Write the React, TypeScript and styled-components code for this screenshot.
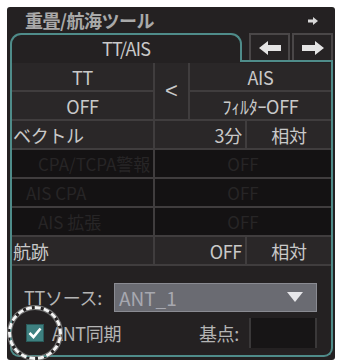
import React from 'react';
import styled, { createGlobalStyle } from 'styled-components';

const Global = createGlobalStyle`
  body {
    margin: 0;
    background: #ffffff;
    font-family: "Noto Sans CJK JP", "Noto Sans", sans-serif;
  }
`;

const TEAL = '#4f8c8a';
const TEXT = '#c9c9c9';

const Arrow = ({ dir }: { dir: 'left' | 'right' }) => (
  <svg width="24" height="16" viewBox="0 0 24 16">
    <path
      d="M1 8 L10 1 L10 5 L23 5 L23 11 L10 11 L10 15 Z"
      fill="#e4e4e4"
      transform={dir === 'right' ? 'translate(24 0) scale(-1 1)' : undefined}
    />
  </svg>
);

const rows = [
  { label: 'CPA/TCPA警報', value: 'OFF', indent: 26 },
  { label: 'AIS CPA', value: 'OFF', indent: 14 },
  { label: 'AIS 拡張', value: 'OFF', indent: 26 },
];

const App = () => {
  return (
    <>
      <Global />
      <S.Frame>
        <S.TitleBar>
          <span>重畳/航海ツール</span>
          <S.SmallArrow>
            <svg width="12" height="10" viewBox="0 0 12 10">
              <path d="M11 5 L6 1 L6 3.5 L1 3.5 L1 6.5 L6 6.5 L6 9 Z" fill="#d8d8d8" />
            </svg>
          </S.SmallArrow>
        </S.TitleBar>
        <S.TabRow>
          <S.Tab>TT/AIS</S.Tab>
          <S.ArrowGroup>
            <S.ArrowBtn>
              <Arrow dir="left" />
            </S.ArrowBtn>
            <S.ArrowBtn>
              <Arrow dir="right" />
            </S.ArrowBtn>
          </S.ArrowGroup>
        </S.TabRow>
        <S.Body>
          <S.Grid>
            <S.TopGrid>
              <S.Cell>TT</S.Cell>
              <S.Swap>&lt;</S.Swap>
              <S.Cell>AIS</S.Cell>
              <S.Cell>OFF</S.Cell>
              <S.Cell>ﾌｨﾙﾀｰOFF</S.Cell>
            </S.TopGrid>
            <S.Row>
              <S.Cell $align="left">ベクトル</S.Cell>
              <S.Cell $align="right">3分</S.Cell>
              <S.Cell>相対</S.Cell>
            </S.Row>
            {rows.map((r) => (
              <S.DimRow key={r.label}>
                <S.DimCell $indent={r.indent}>{r.label}</S.DimCell>
                <S.DimCell>{r.value}</S.DimCell>
              </S.DimRow>
            ))}
            <S.Row>
              <S.Cell $align="left">航跡</S.Cell>
              <S.Cell $align="right">OFF</S.Cell>
              <S.Cell>相対</S.Cell>
            </S.Row>
          </S.Grid>
          <S.Footer>
            <S.SourceRow>
              <S.Label>TTソース:</S.Label>
              <S.Select>
                <span>ANT_1</span>
                <svg width="18" height="12" viewBox="0 0 18 12">
                  <path d="M1 1 L17 1 L9 11 Z" fill="#e6e6ea" />
                </svg>
              </S.Select>
            </S.SourceRow>
            <S.SyncRow>
              <S.Check>
                <svg width="14" height="12" viewBox="0 0 14 12">
                  <path d="M1.5 6 L5.5 10 L12.5 1.5" stroke="#ffffff" strokeWidth="2.6" fill="none" />
                </svg>
                <S.Mark />
              </S.Check>
              <S.Label>ANT同期</S.Label>
              <S.Spacer />
              <S.Label>基点:</S.Label>
              <S.PointBox />
            </S.SyncRow>
          </S.Footer>
        </S.Body>
      </S.Frame>
    </>
  );
};

export default App;

const S = {
  Frame: styled.div`
    margin: 7px 2px 0 7px;
    width: 328px;
    height: 353px;
    background: #242122;
    border-radius: 3px;
    display: flex;
    flex-direction: column;
    padding: 0 2px 3px 3px;
    box-sizing: border-box;
  `,
  TitleBar: styled.div`
    height: 26px;
    display: flex;
    align-items: center;
    justify-content: space-between;
    padding: 0 14px 0 15px;
    color: #a9a9a9;
    font-size: 18px;
    font-weight: 700;
    letter-spacing: -0.5px;
  `,
  SmallArrow: styled.span`
    display: flex;
    margin-top: 2px;
  `,
  TabRow: styled.div`
    display: flex;
    height: 29px;
  `,
  Tab: styled.div`
    width: 232px;
    box-sizing: border-box;
    border: 2px solid ${TEAL};
    border-bottom: none;
    border-radius: 11px 11px 0 0;
    color: ${TEXT};
    font-size: 18px;
    display: flex;
    justify-content: center;
    align-items: center;
    padding-bottom: 2px;
    letter-spacing: -0.8px;
  `,
  ArrowGroup: styled.div`
    flex: 1;
    display: flex;
    gap: 2px;
    padding-left: 7px;
    border-bottom: 2px solid ${TEAL};
  `,
  ArrowBtn: styled.div`
    flex: 1;
    border: 2px solid #4a4748;
    border-bottom: none;
    display: flex;
    align-items: center;
    justify-content: center;
    background: #262324;
  `,
  Body: styled.div`
    flex: 1;
    border: 2px solid ${TEAL};
    border-top: none;
    border-radius: 0 0 9px 9px;
    display: flex;
    flex-direction: column;
    padding: 1px 0 0;
  `,
  Grid: styled.div`
    display: flex;
    flex-direction: column;
    gap: 2px;
    background: #403d3e;
    padding-bottom: 2px;
  `,
  TopGrid: styled.div`
    display: grid;
    grid-template-columns: 141px 33px 1fr;
    grid-template-rows: 27px 27px;
    gap: 2px;
    & > :nth-child(4) {
      grid-column: 1;
      grid-row: 2;
    }
    & > :nth-child(5) {
      grid-column: 3;
      grid-row: 2;
    }
  `,
  Swap: styled.div`
    grid-column: 2;
    grid-row: 1 / span 2;
    background: #2a2728;
    color: ${TEXT};
    font-size: 22px;
    display: flex;
    align-items: center;
    justify-content: center;
    font-family: "Liberation Sans", sans-serif;
  `,
  Row: styled.div`
    display: grid;
    grid-template-columns: 141px 90px 1fr;
    height: 27px;
    gap: 2px;
  `,
  DimRow: styled.div`
    display: grid;
    grid-template-columns: 141px 1fr;
    height: 27px;
    gap: 2px;
  `,
  Cell: styled.div<{ $align?: 'left' | 'right' }>`
    background: #2a2728;
    color: ${TEXT};
    font-size: 18px;
    letter-spacing: -0.3px;
    display: flex;
    align-items: center;
    justify-content: ${(p) =>
      p.$align === 'left' ? 'flex-start' : p.$align === 'right' ? 'flex-end' : 'center'};
    padding: 0 ${(p) => (p.$align === 'right' ? '3px' : '0')} 0
      ${(p) => (p.$align === 'left' ? '1px' : '0')};
    white-space: nowrap;
  `,
  DimCell: styled.div<{ $indent?: number }>`
    background: #141213;
    color: #272526;
    font-size: 17px;
    display: flex;
    align-items: center;
    justify-content: ${(p) => (p.$indent ? 'flex-start' : 'center')};
    padding-left: ${(p) => p.$indent ?? 0}px;
    white-space: nowrap;
  `,
  Footer: styled.div`
    flex: 1;
    display: flex;
    flex-direction: column;
    padding: 16px 14px 0 12px;
    gap: 6px;
  `,
  SourceRow: styled.div`
    display: flex;
    align-items: center;
    gap: 12px;
    height: 30px;
  `,
  Label: styled.span`
    color: #b4b4b4;
    font-size: 18px;
    letter-spacing: -0.3px;
    white-space: nowrap;
  `,
  Select: styled.div`
    flex: 1;
    height: 29px;
    box-sizing: border-box;
    background: #6a6b72;
    border: 1px solid #8a8b92;
    display: flex;
    align-items: center;
    justify-content: space-between;
    padding: 0 12px 0 4px;
    color: #a7a8b0;
    font-size: 19px;
  `,
  SyncRow: styled.div`
    display: flex;
    align-items: center;
    gap: 8px;
    height: 30px;
    position: relative;
  `,
  Check: styled.span`
    width: 16px;
    height: 16px;
    background: #3e8080;
    border: 1px solid #2a5a5a;
    display: flex;
    align-items: center;
    justify-content: center;
    margin-left: 2px;
  `,
  Mark: styled.span`
    position: absolute;
    left: -16px;
    top: -12px;
    width: 48px;
    height: 48px;
    border-radius: 50%;
    border: 3px dashed #f4f4f4;
    box-shadow: 0 0 0 1px #777, inset 0 0 0 1px #777;
  `,
  Spacer: styled.span`
    flex: 1;
  `,
  PointBox: styled.div`
    width: 64px;
    height: 30px;
    background: #171516;
    border-left: 2px solid #3a3839;
    border-right: 2px solid #3a3839;
    margin-left: 2px;
  `,
};
